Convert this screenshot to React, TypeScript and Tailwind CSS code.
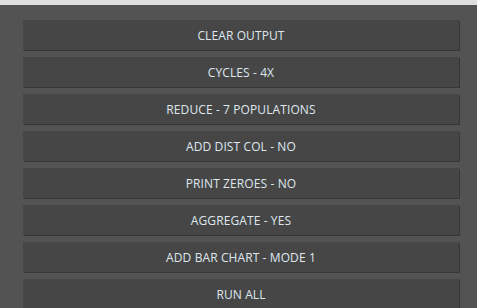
import React from "react";

const items = [
  "CLEAR OUTPUT",
  "CYCLES - 4X",
  "REDUCE - 7 POPULATIONS",
  "ADD DIST COL - NO",
  "PRINT ZEROES - NO",
  "AGGREGATE - YES",
  "ADD BAR CHART - MODE 1",
  "RUN ALL",
];

export default function App() {
  return (
    <div className="w-[477px] h-[308px] overflow-hidden bg-[#535353] flex flex-col">
      <div className="h-[5px] bg-[#dedede] shrink-0" />
      <div className="flex flex-col gap-[7px] pt-[15px] pl-[23px] pr-[18px]">
        {items.map((t) => (
          <button
            key={t}
            className="h-[30px] w-full shrink-0 bg-[#464646] shadow-[1px_1px_0_#363636] text-[#dfe6ee] text-[12px] tracking-[0.1px] pt-[1px] flex items-center justify-center"
            style={{ fontFamily: '"Open Sans", sans-serif' }}
          >
            {t}
          </button>
        ))}
      </div>
    </div>
  );
}
